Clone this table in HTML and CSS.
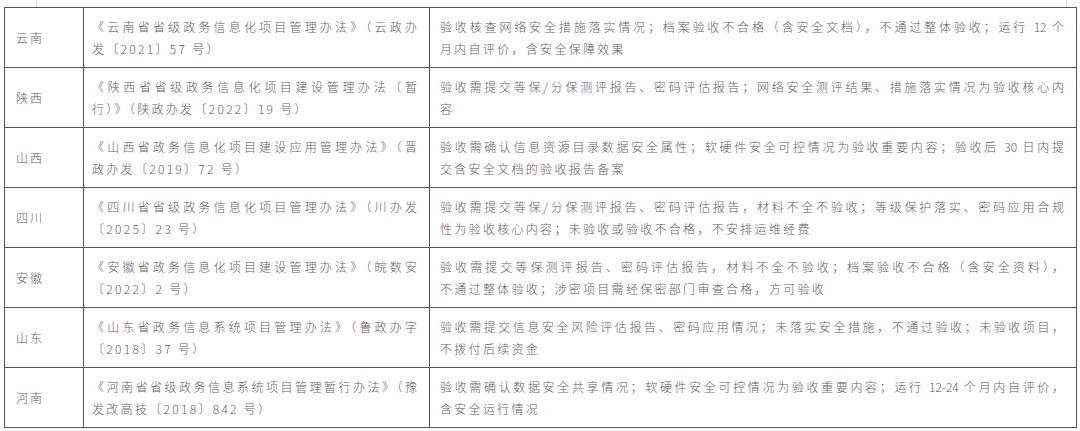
FILE: index.html
```html
<!DOCTYPE html>
<html lang="zh-CN">
<head>
<meta charset="utf-8">
<title>省级政务信息化项目验收要求</title>
<link rel="stylesheet" href="styles.css">
</head>
<body>
<div class="marks"><span class="mark"></span><span class="mark"></span></div>
<table class="grid">
  <colgroup>
    <col class="c-prov">
    <col class="c-law">
    <col class="c-req">
  </colgroup>
  <tbody>
    <tr>
      <td class="prov">云南</td>
      <td class="law"><span class="ln">《云南省省级政务信息化项目管理办法》（云政办</span><span class="ln last">发〔2021〕57 号）</span></td>
      <td class="req"><span class="ln">验收核查网络安全措施落实情况；档案验收不合格（含安全文档），不通过整体验收；运行 12 个</span><span class="ln last">月内自评价，含安全保障效果</span></td>
    </tr>
    <tr>
      <td class="prov">陕西</td>
      <td class="law"><span class="ln">《陕西省省级政务信息化项目建设管理办法（暂</span><span class="ln last">行）》（陕政办发〔2022〕19 号）</span></td>
      <td class="req"><span class="ln">验收需提交等保/分保测评报告、密码评估报告；网络安全测评结果、措施落实情况为验收核心内</span><span class="ln last">容</span></td>
    </tr>
    <tr>
      <td class="prov">山西</td>
      <td class="law"><span class="ln">《山西省政务信息化项目建设应用管理办法》（晋</span><span class="ln last">政办发〔2019〕72 号）</span></td>
      <td class="req"><span class="ln">验收需确认信息资源目录数据安全属性；软硬件安全可控情况为验收重要内容；验收后 30 日内提</span><span class="ln last">交含安全文档的验收报告备案</span></td>
    </tr>
    <tr>
      <td class="prov">四川</td>
      <td class="law"><span class="ln">《四川省省级政务信息化项目管理办法》（川办发</span><span class="ln last">〔2025〕23 号）</span></td>
      <td class="req"><span class="ln">验收需提交等保/分保测评报告、密码评估报告，材料不全不验收；等级保护落实、密码应用合规</span><span class="ln last">性为验收核心内容；未验收或验收不合格，不安排运维经费</span></td>
    </tr>
    <tr>
      <td class="prov">安徽</td>
      <td class="law"><span class="ln">《安徽省政务信息化项目建设管理办法》（皖数安</span><span class="ln last">〔2022〕2 号）</span></td>
      <td class="req"><span class="ln">验收需提交等保测评报告、密码评估报告，材料不全不验收；档案验收不合格（含安全资料），</span><span class="ln last">不通过整体验收；涉密项目需经保密部门审查合格，方可验收</span></td>
    </tr>
    <tr>
      <td class="prov">山东</td>
      <td class="law"><span class="ln">《山东省政务信息系统项目管理办法》（鲁政办字</span><span class="ln last">〔2018〕37 号）</span></td>
      <td class="req"><span class="ln">验收需提交信息安全风险评估报告、密码应用情况；未落实安全措施，不通过验收；未验收项目，</span><span class="ln last">不拨付后续资金</span></td>
    </tr>
    <tr>
      <td class="prov">河南</td>
      <td class="law"><span class="ln">《河南省省级政务信息系统项目管理暂行办法》（豫</span><span class="ln last">发改高技〔2018〕842 号）</span></td>
      <td class="req"><span class="ln">验收需确认数据安全共享情况；软硬件安全可控情况为验收重要内容；运行 12-24 个月内自评价，</span><span class="ln last">含安全运行情况</span></td>
    </tr>
  </tbody>
</table>
</body>
</html>
```

FILE: styles.css
```css
html, body {
  margin: 0;
  padding: 0;
  background: #ffffff;
}

body {
  width: 1080px;
  height: 431px;
  overflow: hidden;
  font-family: "Noto Sans CJK SC", "Noto Sans", sans-serif;
  font-size: 12px;
  font-weight: 300;
  color: #616161;
}

.marks {
  height: 7px;
  display: flex;
  justify-content: space-between;
  padding: 0 13px 0 36px;
}

.mark {
  width: 1px;
  height: 7px;
  background: #d4d4d4;
}

.grid {
  margin-left: 4px;
  width: 1072px;
  border-collapse: collapse;
  table-layout: fixed;
}

.c-prov { width: 79px; }
.c-law { width: 346px; }
.c-req { width: 647px; }

.grid td {
  height: 59px;
  padding: 0;
  border: 1px solid #555555;
  vertical-align: middle;
  line-height: 22px;
}

.grid td.prov {
  padding-left: 11px;
  letter-spacing: 2px;
}

.grid td.law {
  padding: 0 12px 0 8px;
}

.grid td.req {
  padding: 0 12px 0 10px;
}

.ln {
  display: block;
  white-space: nowrap;
  text-align: justify;
  text-align-last: justify;
  letter-spacing: 0;
}

.ln.last {
  text-align: left;
  text-align-last: left;
  letter-spacing: 2.3px;
}
```
